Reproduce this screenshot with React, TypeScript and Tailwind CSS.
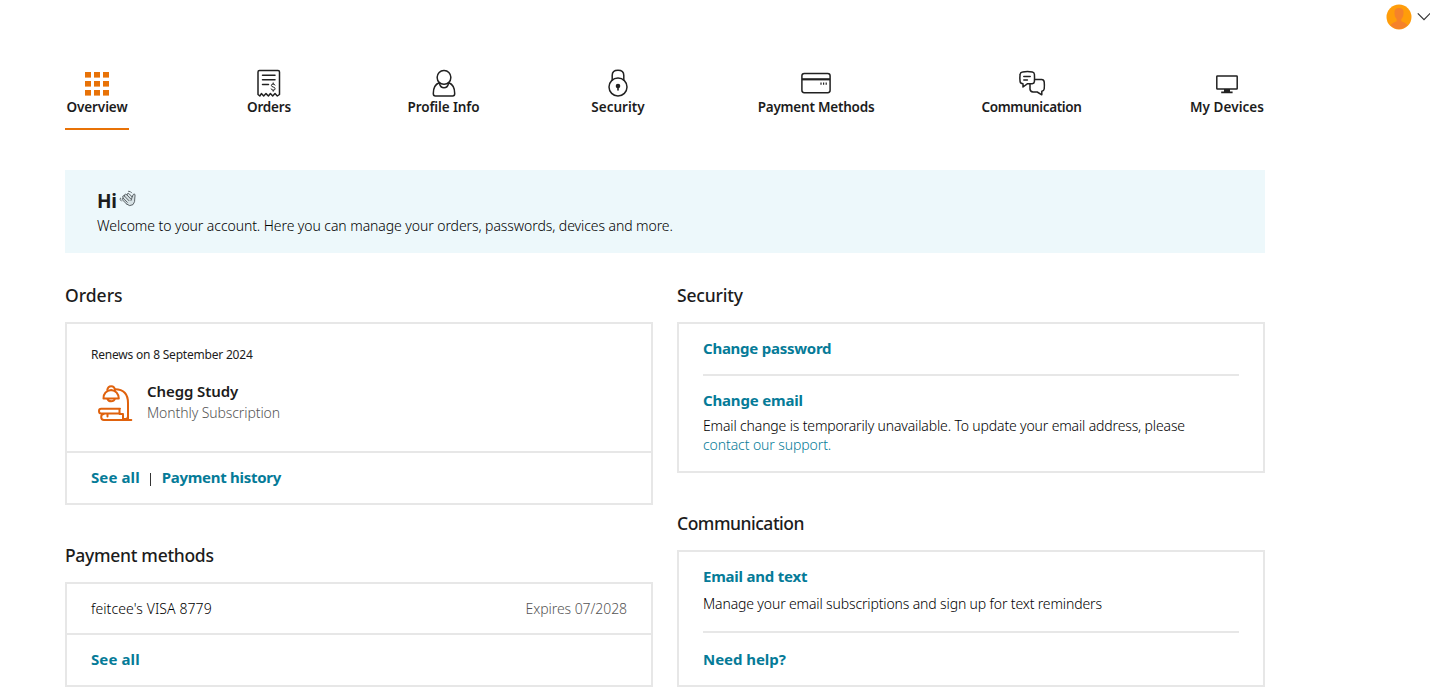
import type { ReactNode } from 'react';

const line = { fill: 'none', stroke: '#212121', strokeWidth: 1.5, strokeLinejoin: 'round', strokeLinecap: 'round' } as const;

function GridIcon() {
  return (
    <svg width="28" height="30" viewBox="0 0 28 30" fill="#e87207">
      {[4, 13, 22].map((y) => [2, 11, 20].map((x) => <rect key={`${x}-${y}`} x={x} y={y} width="6" height="5.6" />))}
    </svg>
  );
}

function OrdersIcon() {
  return (
    <svg width="24" height="30" viewBox="0 0 24 30" {...line}>
      <path d="M1 26.5V4Q1 2.5 2.5 2.5H21Q22.5 2.5 22.5 4V26.5L20.3 28L18 25.6L15.7 28L13.4 25.6L11.4 28L9 25.6L6.7 28L4.4 25.6L2.8 28Z" />
      <path d="M5.5 7.3H18M5.5 11.8H18M5.5 16.5H11.5" />
      <path strokeWidth="1" d="M18 17.1Q17.7 16 16.1 16Q14.4 16 14.4 17.4Q14.4 18.6 16.2 19Q18.1 19.4 18.1 20.8Q18.1 22.2 16.2 22.2Q14.5 22.2 14.2 20.9M16.2 14.9V16M16.2 22.2V23.3" />
    </svg>
  );
}

function ProfileIcon() {
  return (
    <svg width="24" height="30" viewBox="0 0 24 30" {...line}>
      <rect x="5.2" y="2.5" width="13.6" height="13.8" rx="6.6" />
      <path d="M7.2 14.8Q1.3 17 1.3 25.5Q1.3 28 3.3 28H20.7Q22.7 28 22.7 25.5Q22.7 17 16.8 14.8M7.5 15.5Q8.5 19.8 12 19.8Q15.5 19.8 16.5 15.5" />
    </svg>
  );
}

function LockIcon() {
  return (
    <svg width="20" height="30" viewBox="0 0 20 30" {...line}>
      <circle cx="10" cy="19" r="9" />
      <path d="M4.2 12V7.5Q4.2 2.3 10 2.3Q15.8 2.3 15.8 7.5V12" />
      <circle cx="10" cy="18" r="2.3" fill="#212121" stroke="none" />
      <path d="M10 18V22" strokeWidth="1.6" />
    </svg>
  );
}

function CardIcon() {
  return (
    <svg width="30" height="30" viewBox="0 0 30 30" {...line}>
      <rect x="0.9" y="5.4" width="28.2" height="19.3" rx="2.4" />
      <path d="M1 11.3H29" strokeWidth="2.2" strokeLinecap="butt" />
      <path d="M20 14.5V16.7M22.6 14.5V16.7M25.2 14.5V16.7" strokeWidth="1.2" strokeLinecap="butt" />
    </svg>
  );
}

function ChatIcon() {
  return (
    <svg width="28" height="30" viewBox="0 0 28 30" {...line}>
      <path d="M4.5 3.9Q9.5 3.1 14.4 3.9Q16.2 4.2 16.4 6.2Q16.7 10 16.4 13.6Q16.2 15.5 14.2 15.7H9.6L5 19V15.7Q2.4 15.6 2.1 13.6Q1.6 10 2.1 6.2Q2.3 4.2 4.5 3.9Z" />
      <path d="M5.8 8.4H12.2M5.8 11.9H9.4" />
      <path d="M16.8 11.5H23.6Q25.9 11.6 26.2 13.8Q26.6 17.5 26.2 21Q25.9 23 23.8 23.2V26.8L19.2 24H15Q12.3 23.8 12 21.2V16.2" />
    </svg>
  );
}

function DeviceIcon() {
  return (
    <svg width="24" height="30" viewBox="0 0 24 30" {...line}>
      <rect x="1.8" y="7.9" width="20.4" height="13.2" rx="0.6" />
      <path d="M9 21H15V23.6H17.6V25.2H6.2V23.6H9Z" fill="#212121" stroke="none" />
    </svg>
  );
}

function WaveIcon() {
  return (
    <svg width="18" height="18" viewBox="0 0 18 18" fill="none" stroke="#4d5558" strokeWidth="0.9" strokeLinecap="round" strokeLinejoin="round">
      <path d="M7.8 14.2L3.4 9.8Q2.7 8.8 3.5 8.3L4.3 8.5L3.7 6.6Q3.8 5.5 5 5.8L5.5 6.1L5.6 4.7Q6.3 3.8 7.2 4.5L8 5L8.5 3.6Q9.3 3 10.2 3.8L13.2 7L14.1 4.7Q15 3.2 16 4.5Q16.1 6 15.8 8Q16.2 12 14 14.6Q10.6 17 7.8 14.2Z" fill="#d7e2e5" />
      <path d="M4.3 8.5L8.3 12.3M5.5 6.1L10 10.7M8 5L11.8 9M13.2 7L12 10.5M1.4 8.2L1.2 9.6L2.4 11M9.5 1.3L11.3 1.6L12.6 2.9" />
    </svg>
  );
}

function LampIcon() {
  return (
    <svg width="36" height="38" viewBox="0 0 36 38" fill="none" stroke="#e0620d" strokeWidth="2" strokeLinecap="round" strokeLinejoin="round">
      <path d="M6.5 14.5Q6.5 7 14.2 6Q21.3 7 21.8 14.5Z" />
      <path d="M10.3 6Q10.8 2.2 14.2 2.2Q17.6 2.2 18 6M10.5 15Q11.5 17.3 14.2 17.3Q17 17.3 17.8 15" />
      <path d="M18 5.3Q31 5.5 31 19V35.5M23 36H34.3M27 35Q31 35.5 31 32" />
      <path d="M23 24.8H4.2Q2 24.8 2 27Q2 29.6 4.2 29.6H23M22.5 24.8V29.6M6.8 30Q4.2 30.2 4.2 33Q4.2 36 7 36H26.2M26 30.6V36M22.5 30H26M10.5 30.5V32.5" />
    </svg>
  );
}

const tabs: { label: string; box: string; spacing: string; icon: ReactNode }[] = [
  { label: 'Overview', box: 'w-16', spacing: 'tracking-[-0.1px]', icon: <GridIcon /> },
  { label: 'Orders', box: 'w-[66px]', spacing: 'tracking-[-0.15px]', icon: <OrdersIcon /> },
  { label: 'Profile Info', box: 'w-[69px]', spacing: 'tracking-[-0.12px]', icon: <ProfileIcon /> },
  { label: 'Security', box: 'w-[66px]', spacing: 'tracking-[0]', icon: <LockIcon /> },
  { label: 'Payment Methods', box: 'w-[116px]', spacing: 'tracking-[-0.22px]', icon: <CardIcon /> },
  { label: 'Communication', box: 'w-[101px]', spacing: 'tracking-[-0.38px]', icon: <ChatIcon /> },
  { label: 'My Devices', box: 'w-[76px]', spacing: 'tracking-[0.05px]', icon: <DeviceIcon /> },
];

function Heading({ children, className }: { children: ReactNode; className: string }) {
  return <h2 className={`h-[42px] whitespace-nowrap text-[17.5px] font-medium leading-[31px] ${className}`}>{children}</h2>;
}

function Link({ children, className }: { children: ReactNode; className: string }) {
  return (
    <a href="#" className={`whitespace-nowrap text-[15px] font-bold leading-6 text-[#057b98] ${className}`}>
      {children}
    </a>
  );
}

export default function App() {
  return (
    <div className="h-[690px] w-full overflow-hidden bg-white font-['Noto_Sans','Open_Sans',sans-serif] text-[#1c1c1c]">
      <header className="flex h-[68px] items-start justify-end pt-1">
        <svg width="26" height="26" viewBox="0 0 26 26">
          <circle cx="13" cy="13" r="12.5" fill="#ff9d0a" />
          <path d="M8.5 8Q8.5 4 13 4Q17.5 4 17.5 8Q17.8 12.5 15.3 15V17.3Q19 18.3 21.5 21Q18 25 13 25Q8 25 4.5 21Q7 18.3 10.7 17.3V15Q8.2 12.5 8.5 8Z" fill="#f5822a" />
        </svg>
        <svg className="ml-[5px] mt-[8px] -mr-px" width="14" height="10" viewBox="0 0 14 10" fill="none" stroke="#333" strokeWidth="1.2">
          <path d="M0.8 1.3L7 7.7L13.2 1.3" />
        </svg>
      </header>

      <main className="ml-[65px] w-[1200px]">
        <nav className="flex h-[62px] justify-between">
          {tabs.map((tab, i) => (
            <a
              key={tab.label}
              href="#"
              className={`flex h-[62px] flex-col items-center border-b-2 ${tab.box} ${i === 0 ? 'border-[#e87207]' : 'border-transparent'}`}
            >
              {tab.icon}
              <span className={`whitespace-nowrap text-[13.5px] font-semibold leading-[18px] ${tab.spacing}`}>{tab.label}</span>
            </a>
          ))}
        </nav>

        <section className="mt-10 h-[83px] bg-[#edf8fb] px-8 pt-[19px]">
          <div className="flex items-center gap-[3px]">
            <h1 className="text-[19px] font-bold leading-6 tracking-[-0.4px]">Hi</h1>
            <div className="mb-1"><WaveIcon /></div>
          </div>
          <p className="mt-px whitespace-nowrap text-[14px] font-light leading-6 tracking-[-0.077px] text-black">
            Welcome to your account. Here you can manage your orders, passwords, devices and more.
          </p>
        </section>

        <div className="mt-[27px] flex gap-6">
          <div className="w-[588px]">
            <Heading className="tracking-[0]">Orders</Heading>
            <section className="h-[183px] border-2 border-[#e7e7e7]">
              <div className="h-[129px] border-b-2 border-[#e7e7e7] px-6 pt-[21px]">
                <p className="text-[12px] leading-5 tracking-[-0.21px]">Renews on 8 September 2024</p>
                <div className="mt-[15px] flex">
                  <div className="ml-[6px] mt-1 w-[50px]"><LampIcon /></div>
                  <div>
                    <h3 className="text-[15px] font-semibold leading-[22px] tracking-[-0.08px]">Chegg Study</h3>
                    <p className="mt-px text-[14px] font-light leading-5 tracking-[-0.09px] text-[#555]">Monthly Subscription</p>
                  </div>
                </div>
              </div>
              <div className="flex h-12 items-center px-6">
                <Link className="tracking-[0.1px]">See all</Link>
                <span className="ml-[10px] mt-[5px] h-[13px] w-px bg-[#333]" />
                <Link className="ml-[11px] tracking-[-0.28px]">Payment history</Link>
              </div>
            </section>

            <Heading className="mt-[35px] tracking-[-0.3px]">Payment methods</Heading>
            <section className="h-[105px] border-2 border-[#e7e7e7]">
              <div className="flex h-[51px] items-center justify-between border-b-2 border-[#e7e7e7] px-6 text-[14px] font-light">
                <span className="tracking-[0.1px] text-black">feitcee's VISA 8779</span>
                <span className="tracking-[-0.07px] text-[#555]">Expires 07/2028</span>
              </div>
              <div className="flex h-12 items-center px-6">
                <Link className="tracking-[0.1px]">See all</Link>
              </div>
            </section>
          </div>

          <div className="w-[588px]">
            <Heading className="tracking-[-0.2px]">Security</Heading>
            <section className="h-[151px] border-2 border-[#e7e7e7] px-6">
              <div className="flex h-[52px] items-center border-b-2 border-[#e7e7e7] pb-[2px]">
                <Link className="tracking-[-0.25px]">Change password</Link>
              </div>
              <div className="pt-3">
                <Link className="block tracking-[-0.18px]">Change email</Link>
                <p className="mt-1 whitespace-nowrap text-[14px] font-light leading-[19px] tracking-[-0.145px] text-black">
                  Email change is temporarily unavailable. To update your email address, please
                  <br />
                  <a href="#" className="tracking-[-0.09px] text-[#057b98]">contact our support.</a>
                </p>
              </div>
            </section>

            <Heading className="mt-[35px] tracking-[-0.48px]">Communication</Heading>
            <section className="h-[137px] border-2 border-[#e7e7e7] px-6">
              <div className="h-[81px] border-b-2 border-[#e7e7e7] pt-3">
                <Link className="block tracking-[-0.22px]">Email and text</Link>
                <p className="mt-[6px] whitespace-nowrap text-[14px] font-light leading-5 tracking-[-0.135px] text-black">
                  Manage your email subscriptions and sign up for text reminders
                </p>
              </div>
              <div className="flex h-[51px] items-center">
                <Link className="tracking-[-0.05px]">Need help?</Link>
              </div>
            </section>
          </div>
        </div>
      </main>
    </div>
  );
}
